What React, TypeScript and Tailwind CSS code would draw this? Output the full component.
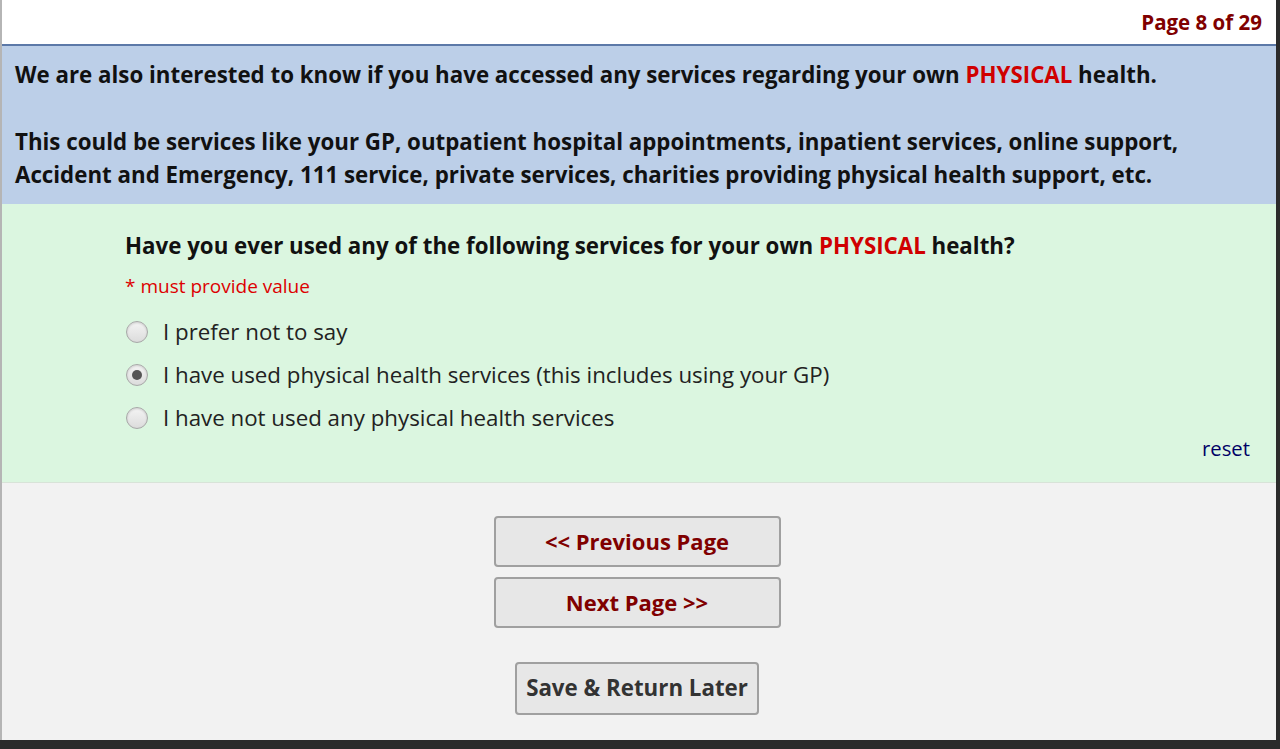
import React from "react";

function Radio({ checked }: { checked?: boolean }) {
  return (
    <span className="relative flex h-[22px] w-[22px] shrink-0 items-center justify-center rounded-full border border-[#a8a8a8] bg-gradient-to-b from-[#f4f4f4] to-[#dcdcdc] shadow-[inset_0_1px_2px_rgba(0,0,0,0.15)]">
      {checked && <span className="h-[10px] w-[10px] rounded-full bg-[#555]" />}
    </span>
  );
}

export default function App() {
  const font = { fontFamily: '"Open Sans", "Noto Sans", sans-serif' };
  return (
    <div className="flex h-[749px] w-[1280px] flex-col overflow-hidden bg-[#f2f2f2]" style={font}>
      <div className="flex flex-1 flex-col border-l-2 border-r-4 border-l-[#b5b5b5] border-r-[#2b2b2b]">
        <div className="flex h-[44px] items-center justify-end bg-white pr-[14px]">
          <span className="text-[20.5px] font-bold text-[#800000]">Page 8 of 29</span>
        </div>
        <div className="h-[2px] bg-[#5c79a8]" />
        <div className="bg-[#bccfe8] px-[13px] pt-[12px] pb-[12px] text-[22.3px] font-bold leading-[33.5px] text-[#111]">
          <p>
            We are also interested to know if you have accessed any services regarding your own{" "}
            <span className="text-[#d00000]">PHYSICAL</span> health.
          </p>
          <p className="mt-[33px]">
            This could be services like your GP, outpatient hospital appointments, inpatient services, online support,
            Accident and Emergency, 111 service, private services, charities providing physical health support, etc.
          </p>
        </div>
        <div className="border-b border-[#d8e3d8] bg-[#dbf6e0] pl-[123px] pr-[26px] pt-[28px] pb-[21px]">
          <div className="text-[22.3px] font-bold leading-[28px] text-[#111]">
            Have you ever used any of the following services for your own{" "}
            <span className="text-[#d00000]">PHYSICAL</span> health?
          </div>
          <div className="mt-[14px] text-[19px] leading-[24px] text-[#dd0000]">* must provide value</div>
          <div className="mt-[20px] flex flex-col gap-[15px] pl-[1px]">
            {[
              { t: "I prefer not to say" },
              { t: "I have used physical health services (this includes using your GP)", c: true },
              { t: "I have not used any physical health services" },
            ].map((o) => (
              <label key={o.t} className="flex h-[28px] items-center gap-[15px] text-[22.3px] text-[#222]">
                <Radio checked={o.c} />
                <span>{o.t}</span>
              </label>
            ))}
          </div>
          <div className="mt-[3px] flex justify-end">
            <span className="text-[20.3px] leading-[26px] text-[#000066]">reset</span>
          </div>
        </div>
        <div className="flex flex-col items-center pt-[33px] pr-[4px]">
          <button className="h-[51px] w-[287px] rounded-[4px] border-2 border-[#a0a0a0] bg-[#e7e7e7] text-[22px] font-bold text-[#800000]">
            &lt;&lt; Previous Page
          </button>
          <button className="mt-[10px] h-[51px] w-[287px] rounded-[4px] border-2 border-[#a0a0a0] bg-[#e7e7e7] text-[22px] font-bold text-[#800000]">
            Next Page &gt;&gt;
          </button>
          <button className="mt-[34px] h-[53px] w-[244px] rounded-[4px] border-2 border-[#a0a0a0] bg-[#e7e7e7] text-[22.3px] font-bold text-[#333]">
            Save &amp; Return Later
          </button>
        </div>
      </div>
      <div className="h-[9px] bg-[#2b2b2b]" />
    </div>
  );
}
